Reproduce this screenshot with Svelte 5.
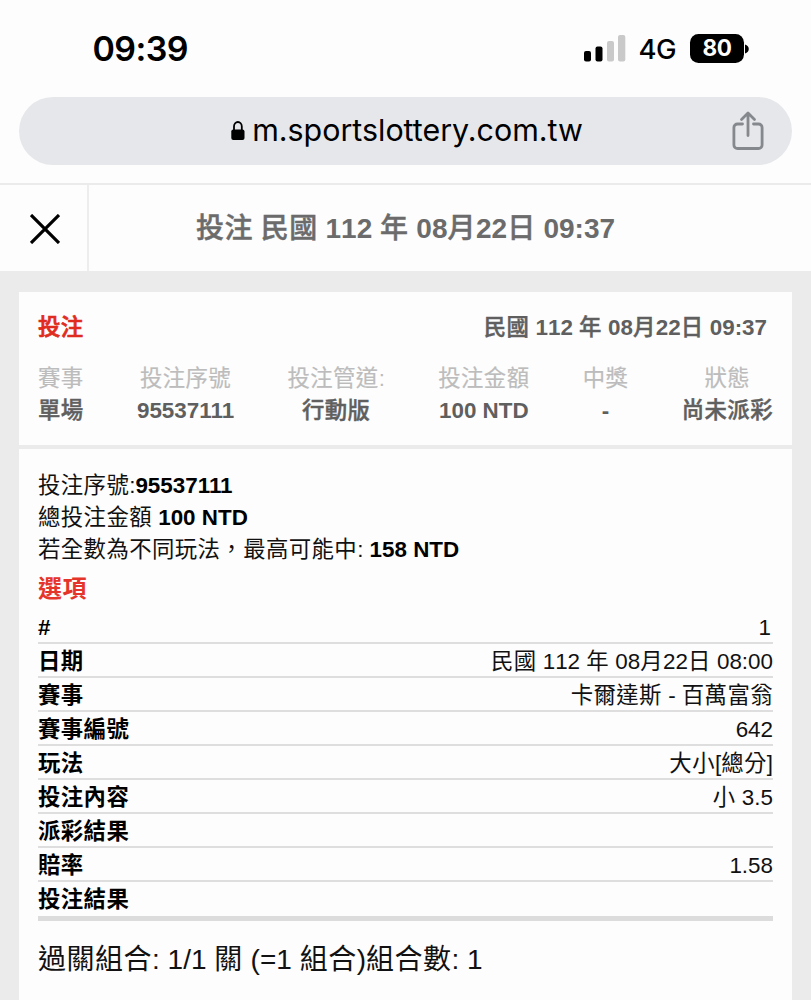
<script>
  const url = 'm.sportslottery.com.tw';
  const placed = '民國 112 年 08月22日 09:37';

  const summary = [
    { label: '賽事', value: '單場' },
    { label: '投注序號', value: '95537111' },
    { label: '投注管道:', value: '行動版' },
    { label: '投注金額', value: '100 NTD' },
    { label: '中獎', value: '-' },
    { label: '狀態', value: '尚未派彩' }
  ];

  const rows = [
    { label: '#', value: '1' },
    { label: '日期', value: '民國 112 年 08月22日 08:00' },
    { label: '賽事', value: '卡爾達斯 - 百萬富翁' },
    { label: '賽事編號', value: '642' },
    { label: '玩法', value: '大小[總分]' },
    { label: '投注內容', value: '小 3.5' },
    { label: '派彩結果', value: '' },
    { label: '賠率', value: '1.58' },
    { label: '投注結果', value: '' }
  ];

  // Chinese runs get their own weight and tracking, so split them from the latin ones.
  function runs(text) {
    return text.split(/([\u3000-\u9fff\uff00-\uffef]+)/).filter((s) => s !== '');
  }

  function isHan(text) {
    return /^[\u3000-\uffef]/.test(text);
  }
</script>

{#snippet mixed(text)}{#each runs(text) as run}{#if isHan(run)}<span class="han">{run}</span>{:else}{run}{/if}{/each}{/snippet}

<div class="screen">
  <div class="status">
    <div class="time">09:39</div>
    <div class="indicators">
      <svg class="signal" viewBox="0 0 42 27">
        <rect x="0" y="16" width="7" height="10.5" rx="2" />
        <rect x="11.5" y="11.5" width="7" height="15" rx="2" />
        <rect class="off" x="23" y="6" width="7" height="20.5" rx="2" />
        <rect class="off" x="34" y="0" width="7.3" height="26.5" rx="2" />
      </svg>
      <span class="network">4G</span>
      <span class="battery">80</span>
      <svg class="tip" viewBox="0 0 5 10"><path d="M0 0.5C5 1.5 5 8.5 0 9.5z" /></svg>
    </div>
  </div>

  <div class="address">
    <svg class="lock" viewBox="0 0 14 20">
      <rect x="0.3" y="8.5" width="13.2" height="10.5" rx="2" />
      <path d="M3 9.5V5.6a3.9 4.6 0 0 1 7.8 0v3.9" />
    </svg>
    <span class="url">{url}</span>
    <svg class="share" viewBox="0 0 32 40">
      <path d="M10.5 13H5.5a3.6 3.6 0 0 0-3.6 3.6v17.3a3.6 3.6 0 0 0 3.6 3.6h21a3.6 3.6 0 0 0 3.6-3.6V16.6a3.6 3.6 0 0 0-3.6-3.6h-5" />
      <path d="M16 24.5V2.5M9.5 8.5L16 2l6.5 6.5" />
    </svg>
  </div>

  <header>
    <div class="close">
      <svg viewBox="0 0 30 30"><path d="M1 1L29 29M29 1L1 29" /></svg>
    </div>
    <h1>{@render mixed('投注 ' + placed)}</h1>
  </header>

  <main>
    <section class="summary">
      <div class="heading">
        <span class="red">{@render mixed('投注')}</span>
        <span class="date">{@render mixed(placed)}</span>
      </div>
      <div class="columns">
        {#each summary as item}
          <div class="column">
            <div class="label">{@render mixed(item.label)}</div>
            <div class="value">{@render mixed(item.value)}</div>
          </div>
        {/each}
      </div>
    </section>

    <section class="detail">
      <p>{@render mixed('投注序號:')}<b>95537111</b></p>
      <p>{@render mixed('總投注金額 ')}<b>100 NTD</b></p>
      <p>{@render mixed('若全數為不同玩法，最高可能中: ')}<b>158 NTD</b></p>
      <h2>{@render mixed('選項')}</h2>
      <div class="table">
        {#each rows as row}
          <div class="row">
            <b>{@render mixed(row.label)}</b>
            <span class:index={row.label === '#'}>{@render mixed(row.value)}</span>
          </div>
        {/each}
      </div>
      <div class="combo">{@render mixed('過關組合: 1/1 關 (=1 組合)組合數: 1')}</div>
    </section>
  </main>
</div>

<style>
  :global(body) {
    background: #fdfdfd;
    overflow: hidden;
  }

  .screen {
    height: 1000px;
    overflow: hidden;
    display: flex;
    flex-direction: column;
    background: #fdfdfd;
    color: #111;
    font-family: "Liberation Sans", "Noto Sans CJK TC", sans-serif;
    font-size: 22.4px;
    font-kerning: none;
    white-space: nowrap;
  }

  .han {
    letter-spacing: 0.018em;
  }

  .status {
    height: 97px;
    box-sizing: border-box;
    padding: 0 61px 0 92.5px;
    display: flex;
    justify-content: space-between;
    align-items: center;
    font-family: Inter, sans-serif;
    color: #000;
  }

  .time {
    font-size: 34px;
    font-weight: 600;
    letter-spacing: -0.6px;
  }

  .indicators {
    display: flex;
    align-items: center;
  }

  .signal {
    width: 42px;
    height: 27px;
    margin-right: 13px;
  }

  .off {
    fill: #c9c9c9;
  }

  .network {
    font-size: 27.5px;
    font-weight: 500;
    letter-spacing: -0.6px;
    margin-right: 14px;
  }

  .battery {
    width: 54px;
    height: 29px;
    border-radius: 8.5px;
    background: #000;
    color: #fff;
    font-size: 22.5px;
    font-weight: 700;
    line-height: 28px;
    letter-spacing: -0.4px;
    text-align: center;
    margin-top: -1px;
  }

  .tip {
    width: 5px;
    height: 10px;
    margin-left: 1px;
  }

  .address {
    position: relative;
    height: 67.5px;
    margin: 0 19px;
    padding-left: 3px;
    border-radius: 34px;
    background: #e6e7eb;
    color: #000;
    display: flex;
    justify-content: center;
    align-items: center;
    gap: 7px;
  }

  .lock {
    width: 14px;
    height: 20px;
  }

  .lock path {
    fill: none;
    stroke: #000;
    stroke-width: 1.8;
  }

  .url {
    font-family: Inter, sans-serif;
    font-size: 30.4px;
    margin-top: -1px;
    font-kerning: normal;
  }

  .share {
    position: absolute;
    right: 28px;
    top: 14px;
    width: 32px;
    height: 40px;
    fill: none;
    stroke: #85888d;
    stroke-width: 2.8;
    stroke-linecap: round;
    stroke-linejoin: round;
  }

  header {
    height: 87.5px;
    box-sizing: border-box;
    margin-top: 18.5px;
    border-top: 2px solid #ebebeb;
    display: flex;
  }

  .close {
    width: 87px;
    border-right: 2px solid #ededed;
    display: flex;
    align-items: center;
    justify-content: center;
  }

  .close svg {
    width: 30px;
    height: 30px;
    margin: 2px 0 0 2px;
    stroke: #000;
    stroke-width: 3.2;
  }

  h1 {
    flex: 1;
    margin: 0 89px 0 0;
    text-align: center;
    font-size: 28px;
    line-height: 88px;
    color: #6b6b6b;
  }

  h1 .han,
  .summary .han {
    font-weight: 500;
    -webkit-text-stroke: 0.45px currentColor;
  }

  main {
    flex: 1;
    padding: 21px 19px 0;
    background: #ebebeb;
    display: flex;
    flex-direction: column;
    gap: 4px;
  }

  section {
    background: #fdfdfd;
    padding: 0 19px;
  }

  .summary {
    height: 153.5px;
    box-sizing: border-box;
    color: #5f5f5f;
    font-weight: bold;
  }

  .heading {
    display: flex;
    justify-content: space-between;
    padding: 19px 6px 0 0;
    line-height: 34px;
  }

  .summary .red .han {
    -webkit-text-stroke-width: 0.7px;
  }

  .red {
    color: #e02b20;
  }

  .columns {
    display: flex;
    justify-content: space-between;
    margin-top: 18px;
    line-height: 32.5px;
    text-align: center;
  }

  .summary .label .han {
    font-weight: normal;
    -webkit-text-stroke-width: 0.2px;
  }

  .label {
    font-weight: normal;
    color: #bcbcbc;
  }

  .value,
  p b {
    font-kerning: normal;
  }

  .detail {
    flex: 1;
    padding-top: 19.5px;
  }

  p {
    margin: 0;
    height: 32.2px;
    line-height: 33px;
  }

  h2 {
    margin: 3.5px 0 0;
    font-size: 24px;
    line-height: 40px;
    color: #e5352a;
  }

  .table {
    margin-top: 1px;
    border-bottom: 5px solid #dcdcdc;
  }

  .row {
    display: flex;
    justify-content: space-between;
    height: 34.1px;
    box-sizing: border-box;
    border-bottom: 2px solid #dedede;
    line-height: 36px;
  }

  .row:last-child {
    height: 33.5px;
    border-bottom: 0;
  }

  b {
    color: #000;
  }

  .index {
    padding-right: 2px;
  }

  .combo {
    margin-top: 17px;
    font-size: 28px;
    line-height: 44px;
  }
</style>
